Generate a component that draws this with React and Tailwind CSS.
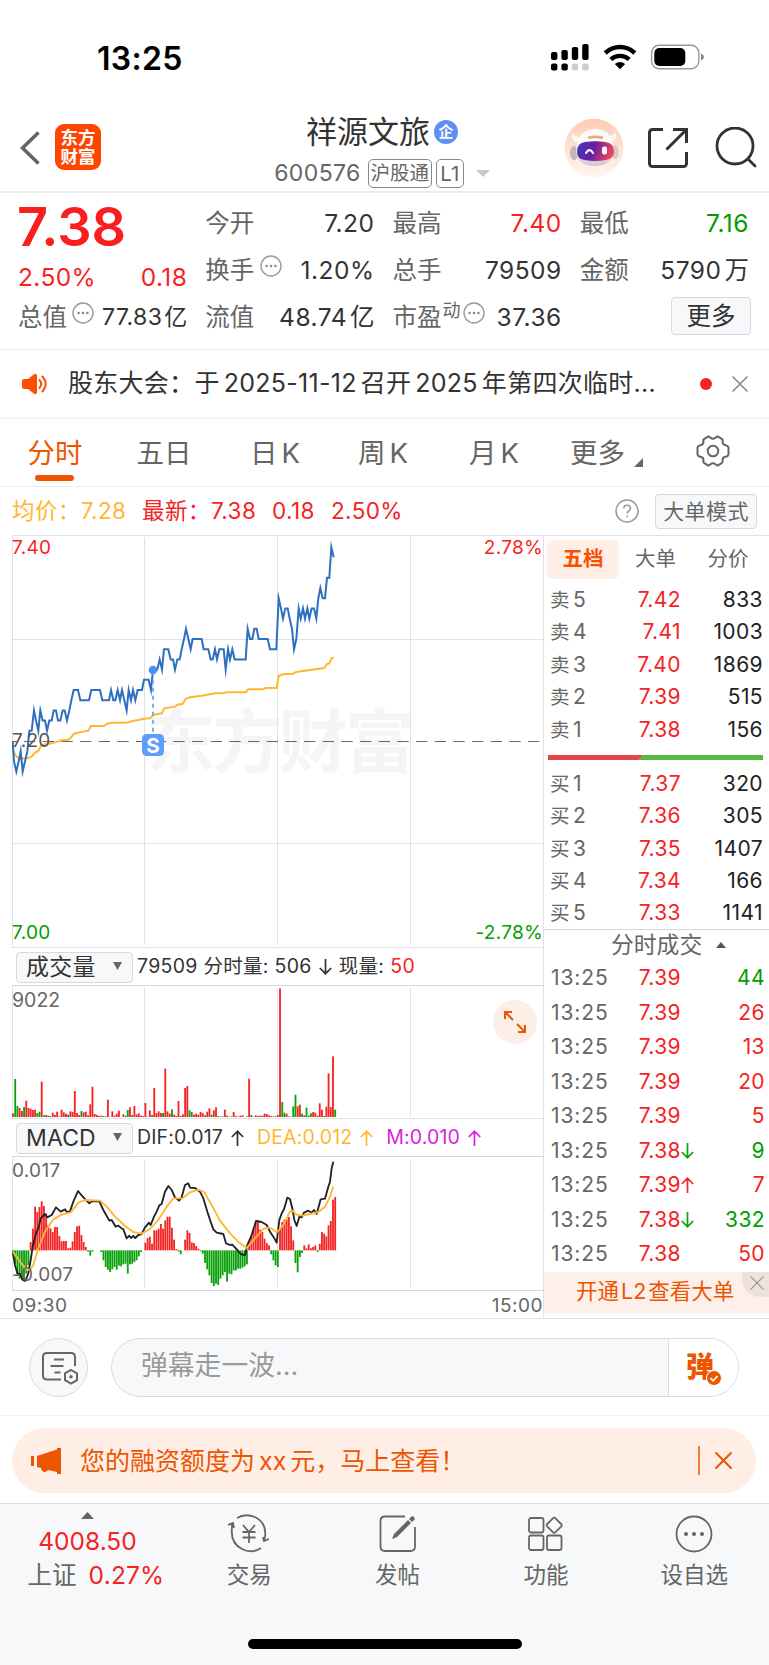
import React from 'react';

const GRID = '#dfe1ea';
const RED = '#f52323';
const GREEN = '#0ba10b';

const quotes = [
  [
    { label: '今开', value: '7.20' },
    { label: '最高', value: '7.40', color: 'text-[#f91f1f]' },
    { label: '最低', value: '7.16', color: 'text-[#009e00]' },
  ],
  [
    { label: '换手', value: '1.20%', dots: true },
    { label: '总手', value: '79509' },
    { label: '金额', value: '5790', unit: '万' },
  ],
];

const asks = [
  ['卖', 5, '7.42', 833],
  ['卖', 4, '7.41', 1003],
  ['卖', 3, '7.40', 1869],
  ['卖', 2, '7.39', 515],
  ['卖', 1, '7.38', 156],
];

const bids = [
  ['买', 1, '7.37', 320],
  ['买', 2, '7.36', 305],
  ['买', 3, '7.35', 1407],
  ['买', 4, '7.34', 166],
  ['买', 5, '7.33', 1141],
];

const deals = [
  { price: '7.39', vol: 44, side: 'down' },
  { price: '7.39', vol: 26 },
  { price: '7.39', vol: 13 },
  { price: '7.39', vol: 20 },
  { price: '7.39', vol: 5 },
  { price: '7.38', vol: 9, side: 'down', arrow: 'down' },
  { price: '7.39', vol: 7, arrow: 'up' },
  { price: '7.38', vol: 332, side: 'down', arrow: 'down' },
  { price: '7.38', vol: 50 },
];

// [x, ticks above the previous close]
const price = [
  [38, 0], [42, -2], [49, -3], [56, -2], [62, -1], [68, -3], [75, -2], [82, -1], [88, 1], [95, 1], [102, 3], [108, 2],
  [115, 1], [121, 3], [128, 2], [135, 2], [141, 1], [148, 2], [155, 2], [161, 3], [168, 3], [174, 2], [181, 2],
  [188, 3], [194, 3], [201, 2], [208, 3], [214, 4], [221, 5], [234, 5], [241, 4], [267, 4], [274, 5], [300, 5],
  [307, 4], [327, 4], [333, 5], [340, 4], [346, 4], [353, 5], [360, 4], [366, 5], [373, 4], [380, 3], [386, 5],
  [393, 4], [399, 5], [406, 4], [413, 5], [426, 5], [432, 6], [446, 6], [453, 5], [459, 7], [472, 7], [479, 8],
  [486, 7], [492, 9], [505, 9], [512, 8], [519, 8], [525, 7], [532, 8], [539, 8], [545, 9], [552, 10], [558, 11],
  [565, 10], [572, 9], [578, 10], [605, 10], [611, 9], [625, 9], [632, 8], [638, 8], [645, 9], [651, 8], [658, 9],
  [671, 9], [677, 7], [684, 9], [690, 8], [697, 9], [704, 8], [737, 8], [743, 11], [750, 10], [757, 10], [763, 11],
  [770, 11], [776, 10], [803, 10], [810, 9], [829, 9], [836, 14], [843, 13], [849, 12], [856, 13], [863, 13],
  [869, 12], [876, 11], [882, 9], [889, 10], [896, 13], [902, 12], [909, 13], [915, 12], [922, 13], [928, 12],
  [935, 13], [942, 13], [949, 12], [955, 14], [961, 15], [968, 14], [975, 14], [981, 16], [988, 16], [994, 19],
  [1001, 18],
];

const average =
  '38,660 50,680 62,686 82,685 95,680 105,668 115,663 122,648 135,643 155,640 185,631 205,629 212,624 222,611 240,607 265,602 273,588 312,588 320,582 335,578 378,578 395,574 415,570 432,566 450,565 460,555 485,550 493,535 525,530 532,524 547,522 558,506 570,502 605,497 645,490 670,489 680,487 738,487 744,478 790,478 797,474 830,474 836,438 848,433 880,431 888,426 930,420 973,414 981,402 988,400 995,384 1001,383';

// negative = sell side, drawn in green
const volume = [
  11, -114, -33, 27, 18, -30, 49, 27, 25, 21, 22, -12, -16, 106, -5, 6, -4, -3, 13, 6, 16, 2, 22, 14, 10, -7, 17, 15,
  78, 12, 6, -18, 14, 16, 5, 38, 91, 9, 6, 3, 4, -3, -2, 52, 1, 17, 4, 10, 19, 0, 8, -4, -21, 29, -6, 33, 8, 11, 4, 3,
  42, -1, 20, -6, 87, 12, 17, 12, -12, 145, 17, 10, -23, 7, 3, 48, -3, 8, 87, 93, -20, -15, 7, 10, 7, 15, 12, -5, 16,
  26, -7, 20, 29, -3, 1, 2, 22, -4, 1, -2, 15, 3, -1, 4, 5, 0, 2, 115, -6, 1, 5, 3, -4, 4, 10, 9, 5, 3, -2, 2, 6, 386,
  -45, -13, 10, 2, -1, -32, -67, 32, 37, -10, 5, -28, -4, -11, 15, 13, 4, 41, 22, -3, 31, 131, 30, 182, -22,
];

const macd = [
  -8, -40, -75, -85, -88, -92, -70, -45, 25, 65, 131, 115, 130, 147, 133, 110, 76, 66, 55, 70, 70, 43, 27, 28, 28, 6, 8,
  27, 55, 72, 74, 46, 25, 10, -4, -16, -4, 0, 0, 0, -5, -30, -50, -58, -65, -57, -50, -58, -46, -48, -42, -40, -70,
  -42, -40, -35, -30, -18, -5, 0, 23, 37, 41, 20, 60, 60, 65, 79, 65, 90, 101, 101, 68, 32, 4, -4, -12, 0, 32, 60, 52,
  24, 22, 13, 5, -3, -10, -38, -57, -75, -98, -107, -100, -104, -85, -75, -65, -94, -70, -72, -60, -60, -55, -55, -52,
  -48, -42, 28, 45, 65, 82, 90, 62, 55, 35, 22, 15, -12, -30, -45, -50, 65, 85, 92, 93, 100, 72, 30, -38, -66, -20, -8,
  15, 6, 18, 6, 10, 15, -5, 20, 55, 50, 42, 75, 88, 152, 160,
];

const dif =
  '38,425 45,465 52,490 60,492 68,510 76,513 85,490 92,450 98,410 108,370 115,355 122,325 135,312 142,322 155,315 168,292 182,305 195,298 200,306 210,304 220,275 234,243 250,262 268,280 275,274 298,274 310,300 328,332 335,330 347,350 355,347 362,353 370,358 380,385 388,377 393,384 400,378 406,384 415,375 425,372 435,352 447,338 452,345 462,320 470,305 478,286 485,282 495,245 505,228 515,240 525,262 537,272 545,262 555,225 565,220 570,233 585,234 600,245 610,265 622,305 632,335 640,358 650,368 670,372 678,400 690,405 697,404 712,420 722,432 735,436 742,405 755,375 768,333 785,336 800,345 810,365 820,380 830,398 838,330 846,308 852,298 862,263 870,267 878,300 883,330 890,348 898,320 905,322 912,308 925,302 935,308 942,300 950,312 962,268 975,266 985,230 990,215 995,175 1000,155';

const dea =
  '38,425 60,455 78,478 90,480 100,465 115,415 135,365 160,328 185,314 212,307 235,278 255,270 300,272 320,290 345,320 375,348 400,366 425,371 450,357 475,330 500,290 520,265 548,265 570,247 595,239 612,246 635,285 660,332 690,370 720,400 740,414 765,385 790,357 805,353 815,355 830,368 850,345 870,305 878,302 888,313 905,317 930,312 955,306 975,290 990,260 1000,230';

const Dots = ({ className = '' }) => (
  <svg className={className} width="22" height="22" viewBox="0 0 22 22" fill="none" stroke="#999" strokeWidth="1.4">
    <circle cx="11" cy="11" r="10" />
    <g fill="#888" stroke="none">
      <circle cx="6.6" cy="11" r="1.3" />
      <circle cx="11" cy="11" r="1.3" />
      <circle cx="15.4" cy="11" r="1.3" />
    </g>
  </svg>
);

const Cross = ({ size, color, width = 2 }) => (
  <svg width={size} height={size} viewBox="0 0 16 16" stroke={color} strokeWidth={width} strokeLinecap="round">
    <path d="M1 1l14 14M15 1L1 15" />
  </svg>
);

const Arrow = ({ up, color, className = '' }) => (
  <svg className={className} width="13" height="16" viewBox="0 0 13 16" fill="none" stroke={color} strokeWidth="1.7">
    {up ? <path d="M6.5 16V1.5M.8 7l5.7-5.7L12.2 7" /> : <path d="M6.5 0v14.5M.8 9l5.7 5.7L12.2 9" />}
  </svg>
);

const StatusBar = () => (
  <div className="h-[100px] pl-[97px] pr-[64px] pt-[34px] flex justify-between">
    <span className="text-[32px] leading-[49px] font-semibold text-black tracking-[0.3px]">13:25</span>
    <svg className="mt-[9px]" width="154" height="29" viewBox="551 43 154 29">
      <rect x="551" y="52" width="6.4" height="8" rx="2" />
      <rect x="561.4" y="50" width="6.4" height="10" rx="2" />
      <rect x="571.8" y="47" width="6.4" height="13" rx="2" />
      <rect x="582.2" y="44" width="6.4" height="16" rx="2" />
      <rect x="551" y="63.5" width="6.4" height="7" rx="2" />
      <rect x="561.4" y="63.5" width="6.4" height="7" rx="2" />
      <rect x="571.8" y="63.5" width="6.4" height="7" rx="2" fill="#ccc" />
      <rect x="582.2" y="63.5" width="6.4" height="7" rx="2" fill="#ccc" />
      <path d="M605.2 53a21.5 21.5 0 0 1 29.6 0" fill="none" stroke="#000" strokeWidth="4.5" />
      <path d="M610.8 59.5a13.5 13.5 0 0 1 18.4 0" fill="none" stroke="#000" strokeWidth="4.3" />
      <path d="M614.8 64q5.2-3.8 10.4 0L620 69.300z" />
      <rect x="651.6" y="45.2" width="47.2" height="23.6" rx="7.5" fill="none" stroke="#999" strokeWidth="1.4" />
      <rect x="654.3" y="48" width="31" height="18" rx="5" />
      <path d="M701 53.5q3 1.2 3 3.5t-3 3.5z" fill="#888" />
    </svg>
  </div>
);

const Robot = () => (
  <svg width="60" height="60" viewBox="0 0 60 60">
    <defs>
      <linearGradient id="halo" x1="0" y1="0" x2="0" y2="1">
        <stop offset="0" stopColor="#ffcbb2" />
        <stop offset="1" stopColor="#fff6f1" />
      </linearGradient>
      <linearGradient id="visor" x1="0" y1="0" x2="1" y2="0.2">
        <stop offset="0" stopColor="#3b3fc0" />
        <stop offset="0.5" stopColor="#6a1fa0" />
        <stop offset="1" stopColor="#e8455f" />
      </linearGradient>
      <linearGradient id="shell" x1="0" y1="0" x2="0" y2="1">
        <stop offset="0.3" stopColor="#fdfafa" />
        <stop offset="1" stopColor="#cfc9d0" />
      </linearGradient>
    </defs>
    <circle cx="30" cy="30" r="29.3" fill="url(#halo)" />
    <path d="M8 15q-2 8 6 10l7-6q-9 1-13-4zM52 14q2 8-6 10l-7-5q9 0 13-5z" fill="#fbf6f6" />
    <ellipse cx="10" cy="35" rx="4" ry="7" fill="#bfb8bf" />
    <ellipse cx="51" cy="34" rx="3.5" ry="7" fill="#d2cbd0" />
    <path d="M12 33q0-21 19-22 19 1 18 22-1 15-18 15-18 0-19-15z" fill="url(#shell)" />
    <path d="M24 18.5q7-2 15 0v2.500q-8-1.500-15 0z" fill="#f0a878" />
    <path d="M13 34q0-9 8-10 10-1.500 20 0 9 1 9 9 0 8-8 9-11 2-21 0-8-1-8-8z" fill="url(#visor)" />
    <path d="M22 35q3.500-6 7 0" fill="none" stroke="#fff" strokeWidth="2" strokeLinecap="round" />
    <rect x="38" y="28.5" width="5" height="8" rx="2.2" fill="#fff" />
  </svg>
);

const Header = () => (
  <div className="h-[93px] border-b-2 border-[#ececec] grid grid-cols-[1fr_auto_1fr]">
    <div className="flex items-start pl-[20px] pt-[24px]">
      <svg className="mt-[6px]" width="20" height="36" viewBox="0 0 20 36" fill="none" stroke="#666" strokeWidth="3.6">
        <path d="M18.5 2.5L2.500 18l16 15.500" />
      </svg>
      <div className="ml-[15px] w-[46px] h-[46px] rounded-[9px] bg-[#fe4600] text-white font-bold text-[17.5px] leading-[18.5px] text-center pt-[5px]">
        <div>东方</div>
        <div>财富</div>
      </div>
    </div>
    <div className="flex flex-col items-center pt-[10px] -ml-[5px]">
      <div className="flex items-center h-[44px]">
        <span className="text-[31px] leading-[44px] text-[#333]">祥源文旅</span>
        <span className="ml-[4px] w-6 h-6 rounded-full bg-[#5f8ff2] text-white text-[15px] leading-6 text-center font-bold">企</span>
      </div>
      <div className="flex items-center h-[30px] mt-[4px] text-[#666]">
        <span className="text-[23px] tracking-[0.4px]">600576</span>
        <span className="ml-[7px] h-[29px] w-[64px] border border-[#888] rounded-[5px] text-[19.5px] leading-[27px] text-center">沪股通</span>
        <span className="ml-[4px] h-[29px] w-[28px] border border-[#888] rounded-[5px] text-[20.5px] leading-[27px] text-center">L1</span>
        <svg className="ml-[12px]" width="14" height="7" viewBox="0 0 14 7" fill="#c8c8c8">
          <path d="M0 0h14L7 7z" />
        </svg>
      </div>
    </div>
    <div className="flex justify-end items-start pt-[18px] pr-[12px]">
      <Robot />
      <svg className="ml-[23px] mt-[9px]" width="42" height="42" viewBox="0 0 42 42" fill="none" stroke="#333" strokeWidth="3">
        <path d="M16 2.500H5.500a3 3 0 0 0-3 3v31a3 3 0 0 0 3 3h31a3 3 0 0 0 3-3V25M26 2.500h13.500V16M39.500 2.500L19.500 22.500" />
      </svg>
      <svg className="ml-[26px] mt-[9px]" width="42" height="42" viewBox="0 0 42 42" fill="none" stroke="#333" strokeWidth="2.8" strokeLinecap="round">
        <circle cx="20" cy="19" r="18" />
        <path d="M33 32l7 7" />
      </svg>
    </div>
  </div>
);

const Quote = ({ label, value, unit, color = 'text-[#333]', dots }) => (
  <div className="flex items-center justify-between">
    <span className="flex items-center text-[24.5px] text-[#666] -ml-px">
      {label}
      {dots && <Dots className="ml-[6px] -mt-[10px]" />}
    </span>
    <span className={`text-[24.5px] tracking-[0.5px] ${color}`}>
      {value}
      {unit && <span className="ml-[3px] tracking-normal">{unit}</span>}
    </span>
  </div>
);

const Summary = () => (
  <div className="h-[157px] border-b border-[#ececec] pl-[19px] pr-5 pt-[7px] grid grid-cols-4 grid-rows-[47px_47px_47px] gap-x-[19px]">
    <div className="row-span-2 text-[#f91f1f]">
      <div className="-ml-[2px] text-[54px] leading-[54px] font-semibold">7.38</div>
      <div className="-ml-px flex justify-between text-[24.5px] leading-[38px] mt-[4px] tracking-[0.4px]">
        <span>2.50%</span>
        <span>0.18</span>
      </div>
    </div>
    {quotes.flat().map((q) => (
      <Quote key={q.label} {...q} />
    ))}
    <div className="-ml-px flex items-center text-[#666]">
      <span className="text-[24.5px]">总值</span>
      <Dots className="ml-[5px] -mt-[10px]" />
      <span className="ml-auto text-[23px] text-[#333] tracking-[0.4px] whitespace-nowrap">77.83<span className="ml-[2px] tracking-normal">亿</span></span>
    </div>
    <Quote label="流值" value="48.74" unit="亿" />
    <div className="-ml-px flex items-center text-[24.5px] text-[#666]">
      市盈
      <span className="text-[18px] -mt-[14px] ml-px">动</span>
      <Dots className="ml-[2px] -mt-[10px]" />
      <span className="ml-auto text-[#333] tracking-[0.5px]">37.36</span>
    </div>
    <div className="flex items-center justify-end">
      <button className="w-[80px] h-[38px] -mr-[2px] -mt-[3px] rounded-[4px] border border-[#d5d9e3] bg-[#f7f8fa] text-[24.5px] leading-[34px] text-[#333]">更多</button>
    </div>
  </div>
);

const Notice = () => (
  <div className="h-[69px] border-b-2 border-[#f4f4f4] flex items-center pl-[22px] pr-[21px]">
    <svg width="26" height="22" viewBox="0 0 26 22" fill="#fc5000">
      <path d="M2 6h4l6-4.800q3-1.700 3 1.800v16q0 3.500-3 1.800L6 16H2q-2 0-2-2V8q0-2 2-2z" />
      <path d="M17.500 7q3.500 4 0 8M20.500 3.500q6.500 7.500 0 15" fill="none" stroke="#fc5000" strokeWidth="2" strokeLinecap="round" />
    </svg>
    <span className="ml-[20px] text-[25px] tracking-[0.28px] text-[#333] whitespace-nowrap">
      股东大会：于<span className="mx-[4px]">2025-11-12</span>召开<span className="mx-[4px]">2025</span>年第四次临时...
    </span>
    <span className="ml-auto mr-[20px] w-3 h-3 rounded-full bg-[#f52323]" />
    <Cross size={16} color="#8a8a8a" width={1.7} />
  </div>
);

const Tabs = () => (
  <div className="h-[68px] border-b border-[#ececec] flex text-[27.5px] leading-[68px] text-[#666] text-center whitespace-nowrap">
    <div className="w-[110px] text-[#ed5500] relative">
      分时
      <span className="absolute left-[35px] bottom-[5px] w-[39px] h-[6px] rounded-full bg-[#ed5500]" />
    </div>
    <div className="w-[108px]">五日</div>
    <div className="w-[114px]">日<span className="ml-[4px]">K</span></div>
    <div className="w-[102px]">周<span className="ml-[4px]">K</span></div>
    <div className="w-[120px]">月<span className="ml-[4px]">K</span></div>
    <div className="ml-[16px] flex">
      更多
      <svg className="mt-[39px] ml-[9px]" width="9" height="9" viewBox="0 0 9 9" fill="#666">
        <path d="M9 0v9H0z" />
      </svg>
    </div>
    <svg className="ml-[53px] mt-[16px]" width="34" height="32" viewBox="0 0 34 32" fill="none" stroke="#666" strokeWidth="2">
      <path d="M11.500 1.800q2-.6 3 1 2.500 2 5 0 1-1.600 3-1l3.200 2q1.500 1 .8 3 0 3 3.200 3.400 2.300.3 2.800 2.300v7q-.5 2-2.800 2.300-3.200.4-3.200 3.400.7 2-.8 3l-3.200 2q-2 .6-3-1-2.500-2-5 0-1 1.600-3 1l-3.200-2q-1.500-1-.8-3 0-3-3.200-3.400-2.300-.3-2.800-2.300v-7q.5-2 2.800-2.300 3.200-.4 3.200-3.400-.7-2 .8-3z" />
      <circle cx="17" cy="16" r="5.3" />
    </svg>
  </div>
);

const InfoBar = () => (
  <div className="h-[48px] flex items-center pl-[12px] pr-[12px] text-[22.5px] text-[#f52323] tracking-[0.4px] whitespace-nowrap">
    <span className="text-[#ffb732] w-[130px]">均价：<span>7.28</span></span>
    <span className="w-[69px]">最新：</span>
    <span className="w-[61px]">7.38</span>
    <span className="w-[59px]">0.18</span>
    <span>2.50%</span>
    <svg className="ml-auto mr-[16px]" width="24" height="24" viewBox="0 0 24 24" fill="none" stroke="#999" strokeWidth="1.5">
      <circle cx="12" cy="12" r="11" />
      <path d="M8.800 9.500q0-3.300 3.300-3.300t3.300 3q0 1.700-1.700 2.800-1.500 1-1.500 2.600" />
      <path d="M12.200 16.500v1.800" />
    </svg>
    <button className="w-[102px] h-[35px] rounded-[4px] border border-[#d5d9e3] bg-[#f7f8fa] text-[21px] leading-[31px] text-[#666]">大单模式</button>
  </div>
);

const VerticalLines = ({ top, bottom }) => (
  <g stroke={GRID} strokeWidth="3">
    {[433.5, 832.5, 1231.5].map((x) => (
      <path key={x} d={`M${x} ${top}V${bottom}`} />
    ))}
  </g>
);

const PriceChart = () => (
  <div className="relative h-[413px] border-t border-[#dfe1ea] text-[19px] leading-6 tracking-[0.3px]">
    <svg className="block" width="531" height="412" viewBox="36 18 1593 1236">
      <text x="438" y="711" fontSize="208" fontWeight="700" fill="#f5f5f6" textLength="806">东方财富</text>
      <VerticalLines top={22} bottom={1245} />
      <path d="M37.5 18V1254M36 328.500H1629M36 940.500H1629M36 1252.500H1629" stroke={GRID} strokeWidth="3" fill="none" />
      <path d="M36 634.500H1629" stroke="#666" strokeWidth="3" strokeDasharray="34 22" strokeDashoffset="20" />
      <polyline points={average} fill="none" stroke="#ffb732" strokeWidth="6" />
      <polyline points={price.map(([x, t]) => `${x},${633 - t * 30.6}`).join(' ')} fill="none" stroke="#2e70bf" strokeWidth="6" strokeMiterlimit="10" />
      <path d="M459 425V612" stroke="#5c9dfd" strokeWidth="5" strokeDasharray="12 12" />
      <circle cx="459" cy="420" r="13" fill="#4a90f5" />
      <rect x="426" y="612" width="66" height="66" rx="14" fill="#5c9dfd" />
      <text x="459" y="668" fontSize="62" fontWeight="700" fill="#fff" textAnchor="middle">S</text>
    </svg>
    <span className="absolute left-0 top-0 text-[#f91f1f]">7.40</span>
    <span className="absolute right-0 top-0 text-[#f91f1f]">2.78%</span>
    <span className="absolute left-0 top-[193px] text-[#555]">7.20</span>
    <span className="absolute left-0 bottom-[3px] text-[#009e00]">7.00</span>
    <span className="absolute right-0 bottom-[3px] text-[#009e00]">-2.78%</span>
  </div>
);

const Picker = ({ children }) => (
  <button className="ml-[4px] mr-[4px] w-[117px] h-[31px] pl-[9px] pr-[10px] rounded-[4px] border border-[#d5d9e3] bg-[#f7f8fa] flex items-center justify-between text-[23px] leading-[29px] text-[#333]">
    {children}
    <svg className="-mt-[2px]" width="9" height="8" viewBox="0 0 9 8" fill="#666">
      <path d="M0 0h9L4.500 8z" />
    </svg>
  </button>
);

const VolumeChart = () => (
  <div className="relative h-[133px] border-t border-[#d3d6de]">
    <svg className="block" width="531" height="132" viewBox="36 168 1593 396">
      <VerticalLines top={173} bottom={561} />
      <path d="M37.5 168V564" stroke={GRID} strokeWidth="3" />
      {volume.map((v, i) => (
        <rect key={i} x={36.3 + 6.62 * i} y={561 - Math.abs(v)} width="5.5" height={Math.abs(v)} fill={v < 0 ? GREEN : RED} />
      ))}
    </svg>
    <span className="absolute left-0 top-px text-[19.5px] leading-[26px] text-[#666]">9022</span>
    <span className="absolute left-[481px] top-[14px] w-[44px] h-[44px] rounded-full bg-[#fdeee7] flex items-center justify-center">
      <svg width="24" height="24" viewBox="0 0 24 24" fill="none" stroke="#ed5500" strokeWidth="2">
        <path d="M2 9V2h7M2 2l8 8M22 15v7h-7M22 22l-8-8" />
      </svg>
    </span>
  </div>
);

const MacdChart = () => (
  <div className="relative h-[135px] border-y border-[#d3d6de] text-[19px] leading-6 text-[#666] tracking-[0.3px]">
    <svg className="block" width="531" height="133" viewBox="36 141 1593 399">
      <VerticalLines top={147} bottom={534} />
      <path d="M37.5 141V540" stroke={GRID} strokeWidth="3" />
      {macd.map((v, i) => (
        <rect key={i} x={36.3 + 6.62 * i} y={v > 0 ? 421 - v : 421} width="5.5" height={Math.abs(v)} fill={v < 0 ? GREEN : RED} />
      ))}
      <polyline points={dif} fill="none" stroke="#222" strokeWidth="5.5" strokeLinejoin="round" />
      <polyline points={dea} fill="none" stroke="#ffb732" strokeWidth="5.5" strokeLinejoin="round" />
    </svg>
    <span className="absolute left-0 top-[2px]">0.017</span>
    <span className="absolute left-0 top-[106px]">-0.007</span>
  </div>
);

const Charts = () => (
  <div className="w-[532px] ml-[12px] border-r border-[#dfe1ea] shrink-0">
    <PriceChart />
    <div className="h-[37px] flex items-center pt-px text-[19.5px] text-[#333] tracking-[0.3px] whitespace-nowrap">
      <Picker>成交量</Picker>
      79509 分时量: 506
      <Arrow color="#333" className="mx-[7px]" />
      现量: <span className="ml-[6px] text-[#f52323]">50</span>
    </div>
    <VolumeChart />
    <div className="h-[38px] border-t border-[#dfe1ea] flex items-center pt-px text-[19.5px] text-[#333] tracking-[0.15px] whitespace-nowrap">
      <Picker>MACD</Picker>
      DIF:0.017
      <Arrow up color="#333" className="ml-[8px] mr-[13px]" />
      <span className="text-[#ffb732]">DEA:0.012</span>
      <Arrow up color="#ffb732" className="ml-[8px] mr-[13px]" />
      <span className="text-[#d81fe0]">M:0.010</span>
      <Arrow up color="#d81fe0" className="ml-[8px]" />
    </div>
    <MacdChart />
    <div className="h-[27px] flex justify-between text-[19px] leading-[30px] text-[#666] tracking-[0.5px]">
      <span>09:30</span>
      <span>15:00</span>
    </div>
  </div>
);

const BookRow = ({ row: [side, level, price, vol] }) => (
  <div className="h-[32.4px] flex items-center pt-px text-[21px] tracking-[0.4px] pl-[6px] pr-[6px]">
    <span className="w-[60px] text-[#666]"><span className="text-[19.5px] mr-[3px]">{side}</span>{level}</span>
    <span className="w-[71px] text-right text-[#f52323]">{price}</span>
    <span className="flex-1 text-right text-[#222]">{vol}</span>
  </div>
);

const OrderBook = () => (
  <div className="flex-1 flex flex-col border-t border-[#dfe1ea]">
    <div className="h-[47px] pt-[4px] pl-[3px] flex text-[20.5px] leading-[37px] text-[#666] text-center">
      <span className="w-[72px] h-[39px] rounded-[6px] bg-[#feeee6] text-[#fc5000] font-bold">五档</span>
      <span className="w-[73px]">大单</span>
      <span className="w-[72px]">分价</span>
    </div>
    {asks.map((row) => (
      <BookRow key={row[1]} row={row} />
    ))}
    <svg className="mt-[10px] mb-[7px] ml-[4px] shrink-0" width="215" height="5" viewBox="0 0 215 5">
      <path d="M0 0h95l-4 5H0z" fill="#e64545" />
      <path d="M95 0h120v5H91z" fill="#52ba3d" />
    </svg>
    {bids.map((row) => (
      <BookRow key={row[1]} row={row} />
    ))}
    <div className="h-[32px] border-t border-[#d3d6de] flex items-center pl-[67px] text-[22.8px] leading-[30px] text-[#666]">
      分时成交
      <svg className="ml-[14px]" width="10" height="6" viewBox="0 0 10 6" fill="#555">
        <path d="M0 6h10L5 0z" />
      </svg>
    </div>
    {deals.map((d, i) => (
      <div key={i} className="h-[34.5px] flex items-center text-[21px] tracking-[0.4px] pl-[7px] pr-[4px]">
        <span className="w-[59px] text-[#666] tracking-[0.9px]">13:25</span>
        <span className="w-[71px] text-right text-[#f52323]">{d.price}</span>
        {d.arrow && <Arrow up={d.arrow === 'up'} color={d.arrow === 'up' ? RED : GREEN} />}
        <span className={`flex-1 text-right ${d.side === 'down' ? 'text-[#009e00]' : 'text-[#f52323]'}`}>{d.vol}</span>
      </div>
    ))}
    <div className="relative h-[41px] mt-px bg-[#fdf0ea] overflow-hidden pl-[32px] text-[21.5px] leading-[38px] text-[#ed5500] whitespace-nowrap">
      开通<span className="mx-[2px]">L2</span>查看大单
      <span className="absolute right-0 top-0 w-[27px] h-[25px] rounded-bl-[18px] bg-[#efe2dc] pl-[8px] pt-[4px]">
        <Cross size={14} color="#999" width={1.6} />
      </span>
    </div>
  </div>
);

const DanmuBar = () => (
  <div className="h-[98px] border-y border-t-[#dfe1ea] border-b-[#f0f0f0] flex items-center pl-[29px] pr-[30px]">
    <span className="w-[59px] h-[59px] rounded-full border border-[#d9dbe3] bg-[#f7f8fa] flex items-center justify-center">
      <svg className="ml-[2px] mt-[2px]" width="36" height="33" viewBox="0 0 36 33" fill="none" stroke="#666" strokeWidth="2">
        <path d="M19 27.500H5q-4 0-4-4V5q0-4 4-4h24q4 0 4 4v9M12 7.500h10M8.500 14h13M12.500 20.500h6" />
        <path d="M29 18l6 3.400v6.800l-6 3.400-6-3.400v-6.800z" />
        <circle cx="29" cy="24.8" r="1.8" fill="#666" stroke="none" />
      </svg>
    </span>
    <div className="ml-[23px] flex-1 h-[59px] rounded-full border border-[#d9dbe3] bg-[#f7f8fa] overflow-hidden flex">
      <span className="flex-1 pl-[29px] text-[26.8px] leading-[53px] text-[#999]">弹幕走一波...</span>
      <span className="relative w-[70px] border-l border-[#d9dbe3] bg-white pl-[17px] text-[28px] leading-[56px] font-black text-[#ed5500]">
        弹
        <svg className="absolute left-[37px] top-[31px]" width="16" height="16" viewBox="0 0 16 16">
          <circle cx="8" cy="8" r="7.5" fill="#ed5500" stroke="#fff" />
          <path d="M4.500 8.200l2.700 2.600L11.500 6" fill="none" stroke="#fff" strokeWidth="1.8" />
        </svg>
      </span>
    </div>
  </div>
);

const Promo = () => (
  <div className="mt-[12px] mb-[10px] ml-[12px] mr-[13px] h-[65px] rounded-full bg-[#feeee6] flex items-center pl-[19px] pr-[24px] text-[#ed5500]">
    <svg width="30" height="26" viewBox="0 0 30 26" fill="#ed5500">
      <path d="M0 8h3v10H0zM6 8l20-6.500V0h4v26h-4v-2l-9-2q-2 3-5 1.500-2-1-2-3.500l-4-1z" />
    </svg>
    <span className="ml-[19px] text-[25px] leading-[60px] whitespace-nowrap">
      您的融资额度为<span className="mx-[4px]">xx</span>元，马上查看！
    </span>
    <span className="ml-auto mr-[15px] w-[2px] h-[29px] bg-[#f27a3a]" />
    <Cross size={17} color="#ed5500" width={1.9} />
  </div>
);

const tools = [
  {
    label: '交易',
    icon: (
      <>
        <path d="M9 5q8-5 18-1 12 6 10 20l-1 4M35 24l1 4 5-2M33 35q-9 6-19 1Q2 30 4 14V11M0 12l5-2 1 5" />
        <path d="M15 12l6 7 6-7M21 19v11M14.500 19h13M14.500 24.500h13" />
      </>
    ),
  },
  {
    label: '发帖',
    icon: (
      <>
        <path d="M28 3.500H8q-4.500 0-4.500 4.500v25.500q0 4.500 4.500 4.500h25.500q4.500 0 4.500-4.500V14" />
        <path d="M15 26l2-5L31 7l3 3-14 14zM32 6l3-3q2 0 3 3l-3 3z" fill="#666" stroke="none" />
      </>
    ),
  },
  {
    label: '功能',
    icon: (
      <>
        <rect x="4" y="5" width="14.5" height="14.5" rx="2" />
        <rect x="4" y="22.5" width="14.5" height="14.5" rx="2" />
        <rect x="22" y="22.5" width="14.5" height="14.5" rx="2" />
        <rect x="-5.8" y="-5.8" width="11.6" height="11.6" rx="1.5" transform="translate(29.2 12.3) rotate(45)" />
      </>
    ),
  },
  {
    label: '设自选',
    icon: (
      <>
        <circle cx="21" cy="21" r="17.5" />
        <g fill="#666" stroke="none">
          <circle cx="13" cy="21" r="2" />
          <circle cx="21" cy="21" r="2" />
          <circle cx="29" cy="21" r="2" />
        </g>
      </>
    ),
  },
];

const BottomNav = () => (
  <div className="h-[162px] border-t border-[#d9dbe3] bg-[#f7f8fa] flex flex-col items-center">
    <div className="w-full flex text-[#666]">
      <div className="w-[175px] flex flex-col items-center pt-[8px]">
        <svg width="13" height="7" viewBox="0 0 13 7" fill="#666">
          <path d="M0 7h13L6.500 0z" />
        </svg>
        <span className="mt-[5px] text-[24.5px] leading-[34px] text-[#f52323]">4008.50</span>
        <span className="ml-[17px] text-[24.5px] leading-[35px] whitespace-nowrap">
          上证<span className="ml-[12px] text-[#f52323] tracking-[0.2px]">0.27%</span>
        </span>
      </div>
      {tools.map((t) => (
        <div key={t.label} className="w-[148.4px] flex flex-col items-center pt-[9px]">
          <svg width="42" height="42" viewBox="0 0 42 42" fill="none" stroke="#666" strokeWidth="1.8">
            {t.icon}
          </svg>
          <span className="text-[22.5px] leading-[40px]">{t.label}</span>
        </div>
      ))}
    </div>
    <div className="mt-auto mb-[16px] w-[274px] h-[10px] rounded-full bg-black" />
  </div>
);

const App = () => {
  return (
    <div className="w-[769px] h-[1665px] overflow-hidden bg-white font-[Inter,'Noto_Sans_CJK_SC',sans-serif]">
      <StatusBar />
      <Header />
      <Summary />
      <Notice />
      <Tabs />
      <InfoBar />
      <div className="flex h-[783px]">
        <Charts />
        <OrderBook />
      </div>
      <DanmuBar />
      <Promo />
      <BottomNav />
    </div>
  );
};

export default App;
